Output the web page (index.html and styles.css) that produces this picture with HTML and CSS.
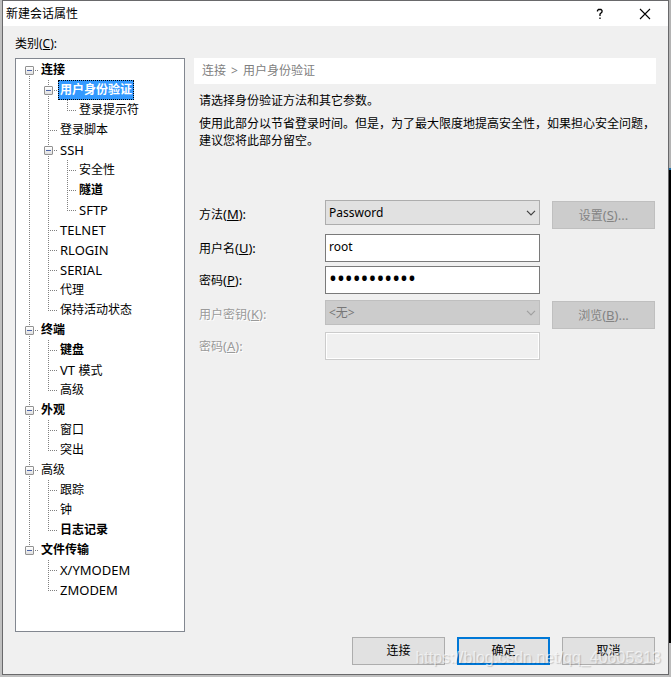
FILE: index.html
```html
<!DOCTYPE html>
<html lang="zh-CN">
<head>
<meta charset="utf-8">
<title>新建会话属性</title>
<meta name="viewport" content="width=device-width, initial-scale=1">
<link rel="stylesheet" href="styles.css">
</head>
<body>
<main class="dialog">
  <header class="titlebar">
    <h1 class="title">新建会话属性</h1>
    <button class="caption-btn" type="button" aria-label="帮助">
      <svg width="12" height="12" viewBox="0 0 12 12"><path d="M3.5 3.5V2.5L4.5 1.5H7L8 2.5V4L6 6V8M6 9.5V11" fill="none" stroke="#000" stroke-width="1.3"/></svg>
    </button>
    <button class="caption-btn" type="button" aria-label="关闭">
      <svg width="12" height="12" viewBox="0 0 12 12"><path d="M1 1L11 11M11 1L1 11" fill="none" stroke="#000" stroke-width="1.1"/></svg>
    </button>
  </header>
  <div class="content">
    <section class="sidebar">
      <h2 class="caption">类别(<u>C</u>):</h2>
      <nav class="tree-box">
        <ul class="tree">
          <li><div class="row"><button class="toggle" type="button" aria-label="折叠"></button><a class="item bold" href="#">连接</a></div>
            <ul>
              <li><div class="row"><button class="toggle" type="button" aria-label="折叠"></button><a class="item bold selected" href="#">用户身份验证</a></div>
                <ul>
                  <li><div class="row"><a class="item" href="#">登录提示符</a></div></li>
                </ul>
              </li>
              <li><div class="row"><a class="item" href="#">登录脚本</a></div></li>
              <li><div class="row"><button class="toggle" type="button" aria-label="折叠"></button><a class="item latin" href="#">SSH</a></div>
                <ul>
                  <li><div class="row"><a class="item" href="#">安全性</a></div></li>
                  <li><div class="row"><a class="item bold" href="#">隧道</a></div></li>
                  <li><div class="row"><a class="item latin" href="#">SFTP</a></div></li>
                </ul>
              </li>
              <li><div class="row"><a class="item latin" href="#">TELNET</a></div></li>
              <li><div class="row"><a class="item latin" href="#">RLOGIN</a></div></li>
              <li><div class="row"><a class="item latin" href="#">SERIAL</a></div></li>
              <li><div class="row"><a class="item" href="#">代理</a></div></li>
              <li><div class="row"><a class="item" href="#">保持活动状态</a></div></li>
            </ul>
          </li>
          <li><div class="row"><button class="toggle" type="button" aria-label="折叠"></button><a class="item bold" href="#">终端</a></div>
            <ul>
              <li><div class="row"><a class="item bold" href="#">键盘</a></div></li>
              <li><div class="row"><a class="item" href="#"><span class="latin">VT </span>模式</a></div></li>
              <li><div class="row"><a class="item" href="#">高级</a></div></li>
            </ul>
          </li>
          <li><div class="row"><button class="toggle" type="button" aria-label="折叠"></button><a class="item bold" href="#">外观</a></div>
            <ul>
              <li><div class="row"><a class="item" href="#">窗口</a></div></li>
              <li><div class="row"><a class="item" href="#">突出</a></div></li>
            </ul>
          </li>
          <li><div class="row"><button class="toggle" type="button" aria-label="折叠"></button><a class="item" href="#">高级</a></div>
            <ul>
              <li><div class="row"><a class="item" href="#">跟踪</a></div></li>
              <li><div class="row"><a class="item" href="#">钟</a></div></li>
              <li><div class="row"><a class="item bold" href="#">日志记录</a></div></li>
            </ul>
          </li>
          <li><div class="row"><button class="toggle" type="button" aria-label="折叠"></button><a class="item bold" href="#">文件传输</a></div>
            <ul>
              <li><div class="row"><a class="item latin" href="#">X/YMODEM</a></div></li>
              <li><div class="row"><a class="item latin" href="#">ZMODEM</a></div></li>
            </ul>
          </li>
        </ul>
      </nav>
    </section>
    <section class="panel">
      <h2 class="crumbs">连接<span class="sep">&gt;</span>用户身份验证</h2>
      <div class="intro">
        <p>请选择身份验证方法和其它参数。</p>
        <p>使用此部分以节省登录时间。但是，为了最大限度地提高安全性，如果担心安全问题，建议您将此部分留空。</p>
      </div>
      <form class="form">
        <label for="method">方法<span class="latin">(<u>M</u>):</span></label>
        <div class="combo">
          <select id="method"><option>Password</option></select>
          <svg class="chevron" width="10" height="6" viewBox="0 0 10 6"><path d="M1 .8L5 4.8L9 .8" fill="none" stroke="currentColor" stroke-width="1.2"/></svg>
        </div>
        <button class="btn" type="button" disabled>设置<span class="latin">(<u>S</u>)...</span></button>

        <label for="user">用户名<span class="latin">(<u>U</u>):</span></label>
        <input class="field" id="user" type="text" value="root">

        <label for="pass">密码<span class="latin">(<u>P</u>):</span></label>
        <input class="field secret" id="pass" type="password" value="12345678901">

        <label class="off" for="key">用户密钥<span class="latin">(<u>K</u>):</span></label>
        <div class="combo">
          <select id="key" disabled><option>&lt;无&gt;</option></select>
          <svg class="chevron" width="10" height="6" viewBox="0 0 10 6"><path d="M1 .8L5 4.8L9 .8" fill="none" stroke="currentColor" stroke-width="1.2"/></svg>
        </div>
        <button class="btn" type="button" disabled>浏览<span class="latin">(<u>B</u>)...</span></button>

        <label class="off" for="phrase">密码<span class="latin">(<u>A</u>):</span></label>
        <input class="field" id="phrase" type="password" disabled>
      </form>
    </section>
  </div>
  <footer class="actions">
    <button class="btn" type="button">连接</button>
    <button class="btn primary" type="button">确定</button>
    <button class="btn" type="button">取消</button>
  </footer>
</main>
<div class="watermark">https://blog.csdn.net/qq_40605313</div>
</body>
</html>
```
FILE: styles.css
```css
* { box-sizing: border-box; }

body {
  margin: 0;
  min-height: 100vh;
  padding: 0 2px 2px;
  display: flex;
  position: relative;
  overflow: hidden;
  background:
    linear-gradient(#b4b4b4 168px, #1c6fa8 168px, #1c6fa8 170px, #000 170px, #000 643px, #bbb 643px) right top / 2px 100% no-repeat,
    #c0c0c0;
  color: #000;
  font: 12px/18px "Noto Sans", "Noto Sans CJK SC", sans-serif;
}

h1, h2, p, ul { margin: 0; padding: 0; font-size: 12px; font-weight: 400; }
button, input, select { font: inherit; color: inherit; margin: 0; }
.latin { font-size: 13px; }

.dialog {
  flex: 1;
  display: flex;
  flex-direction: column;
  min-width: 0;
  background: #f0f0f0;
  border: 1px solid #69696b;
}

.titlebar {
  display: flex;
  align-items: center;
  height: 25px;
  padding-right: 1px;
  background: #fff;
}
.title { flex: 1; padding-left: 3px; }
.caption-btn {
  width: 45px;
  height: 25px;
  padding: 0;
  border: 0;
  background: none;
  display: grid;
  place-items: center;
}

.content {
  flex: 1;
  display: flex;
  gap: 9px;
  padding: 9px 12px 0;
}
.sidebar { flex: 0 0 170px; display: flex; flex-direction: column; }
.caption { height: 23px; }

.tree-box {
  flex: 1;
  padding: 1px 0 0 9px;
  background: #fff;
  border: 1px solid #828790;
}
.tree, .tree ul { list-style: none; }
.tree ul { padding-left: 19px; }
.tree li {
  background:
    repeating-linear-gradient(90deg, #808080 0 1px, transparent 1px 2px) 4px 10px / 9px 1px no-repeat,
    repeating-linear-gradient(#808080 0 1px, transparent 1px 2px) 4px 0 / 1px 100% no-repeat;
}
.tree > li:first-child { background-position: 4px 10px, 4px 10px; }
.tree li:last-child { background-size: 9px 1px, 1px 10px; }
.row {
  display: flex;
  align-items: center;
  height: 20px;
  padding-left: 14px;
}
.toggle {
  flex: none;
  width: 9px;
  height: 9px;
  margin: 1px 5px 0 -14px;
  padding: 0;
  border: 1px solid #919191;
  border-radius: 1px;
  background:
    linear-gradient(#4b63a7, #4b63a7) center / 5px 1px no-repeat,
    linear-gradient(#fff, #e0e0e0);
}
.item {
  padding: 0 1px;
  border: 1px solid transparent;
  color: inherit;
  text-decoration: none;
  white-space: nowrap;
}
.bold { font-weight: 700; }
.selected {
  color: #fff;
  background: #3399ff;
  border: 1px dotted #000;
}

.panel { flex: 1; min-width: 0; padding-top: 23px; }
.crumbs {
  height: 26px;
  padding-left: 8px;
  line-height: 26px;
  background: #fff;
  color: #808080;
}
.sep { margin: 0 5px; }
.intro { padding: 8px 0 0 5px; }
.intro p { line-height: 17px; }
.intro p + p { margin-top: 6px; }

.form {
  display: grid;
  grid-template-columns: 122px minmax(120px, 1fr) 103px;
  grid-template-rows: 30px 28px 30px 28px 28px;
  gap: 4px;
  align-items: start;
  padding: 51px 1px 0 5px;
}
.form label { grid-column: 1; line-height: 28px; }
.form .field, .combo { margin-right: 8px; }
.form .btn { margin-top: 1px; }
.off { color: #9a9a9a; text-shadow: 1px 1px 0 #fff; }

.combo { position: relative; }
.combo select {
  display: block;
  width: 100%;
  height: 25px;
  padding: 0 20px 0 3px;
  appearance: none;
  border: 1px solid #adadad;
  border-radius: 0;
  background: #e1e1e1;
}
.combo select:disabled {
  color: #777;
  opacity: 1;
  background: #ccc;
  border-color: #bfbfbf;
}
.chevron {
  position: absolute;
  right: 4px;
  top: 10px;
  color: #404040;
  pointer-events: none;
}
.combo select:disabled + .chevron { color: #a0a0a0; }

.field {
  min-width: 0;
  height: 28px;
  padding: 0 3px 4px;
  border: 1px solid #7a7a7a;
  border-radius: 0;
  background: #fff;
}
.field:disabled {
  border-color: #ccc;
  background: #f0f0f0;
  box-shadow: inset 0 0 0 1px #fff;
}
.secret { font-size: 21px; }

.btn {
  height: 28px;
  padding: 0;
  border: 1px solid #adadad;
  border-radius: 0;
  background: #e1e1e1;
}
.btn:disabled {
  color: #838383;
  background: #ccc;
  border-color: #bfbfbf;
}
.primary { border: 2px solid #0078d7; }

.actions {
  display: flex;
  justify-content: flex-end;
  gap: 12px;
  padding: 5px 13px 9px;
}
.actions .btn { width: 93px; }

.watermark {
  position: absolute;
  right: 10px;
  bottom: 9px;
  color: rgba(255, 255, 255, .6);
  font: 16px/20px "Liberation Sans", sans-serif;
  text-shadow: 1px 1px 1px rgba(0, 0, 0, .18);
  pointer-events: none;
}
```
